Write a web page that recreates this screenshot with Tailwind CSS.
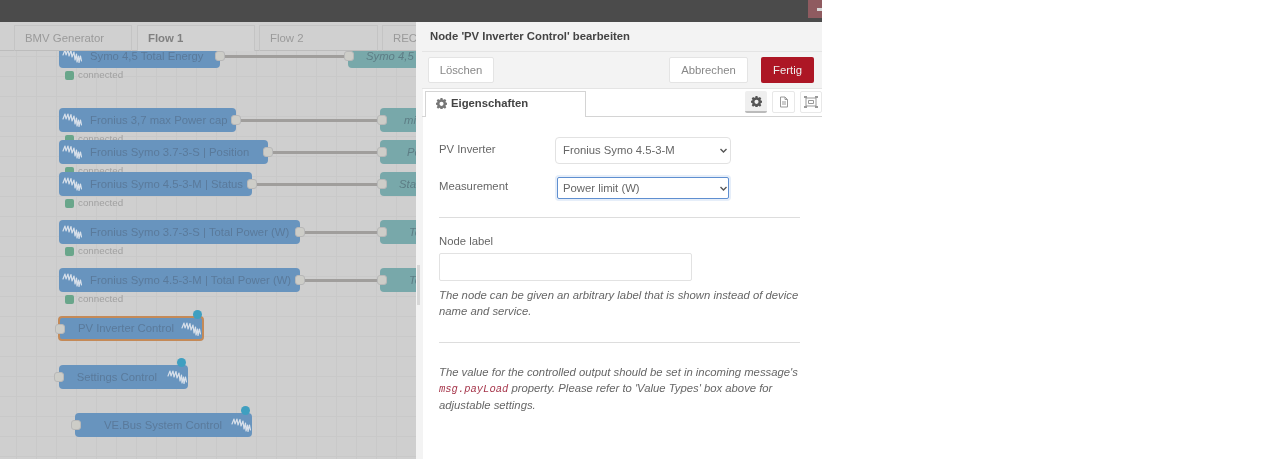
<!DOCTYPE html>
<html lang="en">
    <head>
        <meta charset="UTF-8" />
        <script src="https://cdn.jsdelivr.net/npm/@tailwindcss/browser@4"></script>
        <title>Node-RED</title>
    </head>
    <body class="bg-white h-[459px] overflow-hidden font-['Liberation_Sans',Arial,sans-serif]">
        <svg width="0" height="0" class="absolute">
            <defs>
                <path id="victron" fill="none" stroke="#d8e0ea" stroke-width="1.2" stroke-linejoin="round" stroke-linecap="round" d="M1 6 L3 1 L4 6 L6 1 L7 7 L9 1.5 L10 8 L12 3 L13 11 L14.5 5 L15 13 L16.5 7 L17 13.5 L18.5 7 L19.5 12" />
            </defs>
        </svg>

        <div class="flex flex-col w-[822px] h-[459px] blur-[0.3px]">
            <!-- Header -->
            <header class="flex justify-end h-[22px] shrink-0 bg-[#4b4b4b]">
                <div class="flex items-center justify-end w-[14px] h-[18px] bg-[#8f5b60]">
                    <div class="w-[5px] h-[3px] bg-[#d8d8d8]"></div>
                </div>
            </header>

            <div class="flex flex-1 min-h-0">
                <!-- Workspace -->
                <div class="relative w-[416px] shrink-0 overflow-hidden bg-[#cfcfcf] bg-[linear-gradient(#c9c9c9_1px,transparent_1px),linear-gradient(90deg,#c9c9c9_1px,transparent_1px)] bg-[size:20px_20px] bg-[position:-4px_-6px]">
                    <!-- Wires -->
                    <div class="absolute left-[220px] top-[33px] w-[130px] h-[3px] bg-[#a09e9c]"></div>
                    <div class="absolute left-[236px] top-[97px] w-[146px] h-[3px] bg-[#a09e9c]"></div>
                    <div class="absolute left-[268px] top-[129px] w-[114px] h-[3px] bg-[#a09e9c]"></div>
                    <div class="absolute left-[252px] top-[161px] w-[130px] h-[3px] bg-[#a09e9c]"></div>
                    <div class="absolute left-[300px] top-[209px] w-[82px] h-[3px] bg-[#a09e9c]"></div>
                    <div class="absolute left-[300px] top-[257px] w-[82px] h-[3px] bg-[#a09e9c]"></div>

                    <!-- Output nodes on the right -->
                    <div class="absolute left-[348px] top-[22px] w-[80px] h-[24px] rounded-[4px] bg-[#78a8aa] pl-[18px] text-[11.3px] leading-[24px] italic text-[#5d7d85] whitespace-nowrap">Symo 4,5</div>
                    <div class="absolute left-[380px] top-[86px] w-[50px] h-[24px] rounded-[4px] bg-[#78a8aa] pl-[24px] text-[11.3px] leading-[24px] italic text-[#5d7d85] whitespace-nowrap">mi</div>
                    <div class="absolute left-[380px] top-[118px] w-[50px] h-[24px] rounded-[4px] bg-[#78a8aa] pl-[27px] text-[11.3px] leading-[24px] italic text-[#5d7d85] whitespace-nowrap">Po</div>
                    <div class="absolute left-[380px] top-[150px] w-[50px] h-[24px] rounded-[4px] bg-[#78a8aa] pl-[19px] text-[11.3px] leading-[24px] italic text-[#5d7d85] whitespace-nowrap">Sta</div>
                    <div class="absolute left-[380px] top-[198px] w-[50px] h-[24px] rounded-[4px] bg-[#78a8aa] pl-[29px] text-[11.3px] leading-[24px] italic text-[#5d7d85] whitespace-nowrap">To</div>
                    <div class="absolute left-[380px] top-[246px] w-[50px] h-[24px] rounded-[4px] bg-[#78a8aa] pl-[29px] text-[11.3px] leading-[24px] italic text-[#5d7d85] whitespace-nowrap">To</div>
                    <div class="absolute left-[344px] top-[29px] w-[10px] h-[10px] rounded-[3px] border border-[#b8b8b8] bg-[#cdcdc8]"></div>
                    <div class="absolute left-[377px] top-[93px] w-[10px] h-[10px] rounded-[3px] border border-[#b8b8b8] bg-[#cdcdc8]"></div>
                    <div class="absolute left-[377px] top-[125px] w-[10px] h-[10px] rounded-[3px] border border-[#b8b8b8] bg-[#cdcdc8]"></div>
                    <div class="absolute left-[377px] top-[157px] w-[10px] h-[10px] rounded-[3px] border border-[#b8b8b8] bg-[#cdcdc8]"></div>
                    <div class="absolute left-[377px] top-[205px] w-[10px] h-[10px] rounded-[3px] border border-[#b8b8b8] bg-[#cdcdc8]"></div>
                    <div class="absolute left-[377px] top-[253px] w-[10px] h-[10px] rounded-[3px] border border-[#b8b8b8] bg-[#cdcdc8]"></div>

                    <!-- Input nodes: status text first so later nodes cover it -->
                    <div class="absolute left-[65px] top-[46px] flex items-center gap-[4px] text-[9.8px] text-[#a0a0a0]"><span class="w-[9px] h-[9px] rounded-[2px] bg-[#69a68b]"></span>connected</div>
                    <div class="absolute left-[59px] top-[22px] w-[161px] h-[24px] rounded-[4px] bg-[#6894be] flex items-center text-[11.3px] text-[#5a7a9b] whitespace-nowrap">
                        <svg class="ml-[3px] w-[20px] h-[14px]" viewBox="0 0 20 14"><use href="#victron" /></svg>
                        <span class="ml-[8px]">Symo 4,5 Total Energy</span>
                    </div>

                    <div class="absolute left-[65px] top-[110px] flex items-center gap-[4px] text-[9.8px] text-[#a0a0a0]"><span class="w-[9px] h-[9px] rounded-[2px] bg-[#69a68b]"></span>connected</div>
                    <div class="absolute left-[59px] top-[86px] w-[177px] h-[24px] rounded-[4px] bg-[#6894be] flex items-center text-[11.3px] text-[#5a7a9b] whitespace-nowrap">
                        <svg class="ml-[3px] w-[20px] h-[14px]" viewBox="0 0 20 14"><use href="#victron" /></svg>
                        <span class="ml-[8px]">Fronius 3,7 max Power cap</span>
                    </div>

                    <div class="absolute left-[65px] top-[142px] flex items-center gap-[4px] text-[9.8px] text-[#a0a0a0]"><span class="w-[9px] h-[9px] rounded-[2px] bg-[#69a68b]"></span>connected</div>
                    <div class="absolute left-[59px] top-[118px] w-[209px] h-[24px] rounded-[4px] bg-[#6894be] flex items-center text-[11.3px] text-[#5a7a9b] whitespace-nowrap">
                        <svg class="ml-[3px] w-[20px] h-[14px]" viewBox="0 0 20 14"><use href="#victron" /></svg>
                        <span class="ml-[8px]">Fronius Symo 3.7-3-S | Position</span>
                    </div>

                    <div class="absolute left-[59px] top-[150px] w-[193px] h-[24px] rounded-[4px] bg-[#6894be] flex items-center text-[11.3px] text-[#5a7a9b] whitespace-nowrap">
                        <svg class="ml-[3px] w-[20px] h-[14px]" viewBox="0 0 20 14"><use href="#victron" /></svg>
                        <span class="ml-[8px]">Fronius Symo 4.5-3-M | Status</span>
                    </div>
                    <div class="absolute left-[65px] top-[174px] flex items-center gap-[4px] text-[9.8px] text-[#a0a0a0]"><span class="w-[9px] h-[9px] rounded-[2px] bg-[#69a68b]"></span>connected</div>

                    <div class="absolute left-[59px] top-[198px] w-[241px] h-[24px] rounded-[4px] bg-[#6894be] flex items-center text-[11.3px] text-[#5a7a9b] whitespace-nowrap">
                        <svg class="ml-[3px] w-[20px] h-[14px]" viewBox="0 0 20 14"><use href="#victron" /></svg>
                        <span class="ml-[8px]">Fronius Symo 3.7-3-S | Total Power (W)</span>
                    </div>
                    <div class="absolute left-[65px] top-[222px] flex items-center gap-[4px] text-[9.8px] text-[#a0a0a0]"><span class="w-[9px] h-[9px] rounded-[2px] bg-[#69a68b]"></span>connected</div>

                    <div class="absolute left-[59px] top-[246px] w-[241px] h-[24px] rounded-[4px] bg-[#6894be] flex items-center text-[11.3px] text-[#5a7a9b] whitespace-nowrap">
                        <svg class="ml-[3px] w-[20px] h-[14px]" viewBox="0 0 20 14"><use href="#victron" /></svg>
                        <span class="ml-[8px]">Fronius Symo 4.5-3-M | Total Power (W)</span>
                    </div>
                    <div class="absolute left-[65px] top-[270px] flex items-center gap-[4px] text-[9.8px] text-[#a0a0a0]"><span class="w-[9px] h-[9px] rounded-[2px] bg-[#69a68b]"></span>connected</div>

                    <!-- Output ports of the input nodes -->
                    <div class="absolute left-[215px] top-[29px] w-[10px] h-[10px] rounded-[3px] border border-[#b8b8b8] bg-[#cdcdc8]"></div>
                    <div class="absolute left-[231px] top-[93px] w-[10px] h-[10px] rounded-[3px] border border-[#b8b8b8] bg-[#cdcdc8]"></div>
                    <div class="absolute left-[263px] top-[125px] w-[10px] h-[10px] rounded-[3px] border border-[#b8b8b8] bg-[#cdcdc8]"></div>
                    <div class="absolute left-[247px] top-[157px] w-[10px] h-[10px] rounded-[3px] border border-[#b8b8b8] bg-[#cdcdc8]"></div>
                    <div class="absolute left-[295px] top-[205px] w-[10px] h-[10px] rounded-[3px] border border-[#b8b8b8] bg-[#cdcdc8]"></div>
                    <div class="absolute left-[295px] top-[253px] w-[10px] h-[10px] rounded-[3px] border border-[#b8b8b8] bg-[#cdcdc8]"></div>

                    <!-- Control nodes -->
                    <div class="absolute left-[58px] top-[294px] w-[146px] h-[25px] rounded-[4px] border-2 border-[#c48a58] bg-[#6894be] flex items-center justify-end text-[11.3px] text-[#5a7a9b] whitespace-nowrap">
                        <span class="mr-[7px]">PV Inverter Control</span>
                        <svg class="mr-[1px] w-[20px] h-[14px]" viewBox="0 0 20 14"><use href="#victron" /></svg>
                    </div>
                    <div class="absolute left-[55px] top-[302px] w-[10px] h-[10px] rounded-[3px] border border-[#b8b8b8] bg-[#cdcdc8]"></div>
                    <div class="absolute left-[193px] top-[288px] w-[9px] h-[9px] rounded-full bg-[#3f9fc0]"></div>

                    <div class="absolute left-[59px] top-[343px] w-[129px] h-[24px] rounded-[4px] bg-[#6894be] flex items-center justify-end text-[11.3px] text-[#5a7a9b] whitespace-nowrap">
                        <span class="mr-[10px]">Settings Control</span>
                        <svg class="mr-[1px] w-[20px] h-[14px]" viewBox="0 0 20 14"><use href="#victron" /></svg>
                    </div>
                    <div class="absolute left-[54px] top-[350px] w-[10px] h-[10px] rounded-[3px] border border-[#b8b8b8] bg-[#cdcdc8]"></div>
                    <div class="absolute left-[177px] top-[336px] w-[9px] h-[9px] rounded-full bg-[#3f9fc0]"></div>

                    <div class="absolute left-[75px] top-[391px] w-[177px] h-[24px] rounded-[4px] bg-[#6894be] flex items-center justify-end text-[11.3px] text-[#5a7a9b] whitespace-nowrap">
                        <span class="mr-[9px]">VE.Bus System Control</span>
                        <svg class="mr-[1px] w-[20px] h-[14px]" viewBox="0 0 20 14"><use href="#victron" /></svg>
                    </div>
                    <div class="absolute left-[71px] top-[398px] w-[10px] h-[10px] rounded-[3px] border border-[#b8b8b8] bg-[#cdcdc8]"></div>
                    <div class="absolute left-[241px] top-[384px] w-[9px] h-[9px] rounded-full bg-[#3f9fc0]"></div>

                    <!-- Flow tabs -->
                    <div class="absolute inset-x-0 top-0 h-[29px] bg-[#d0d0d0] border-b border-[#bcbcbc] flex gap-[5px] pl-[14px] pt-[3px] text-[11.4px] text-[#9a9a9a]">
                        <div class="w-[118px] h-[26px] shrink-0 border border-b-0 border-[#c4c4c4] pl-[10px] leading-[24px]">BMV Generator</div>
                        <div class="w-[118px] h-[26px] shrink-0 border border-b-0 border-[#c4c4c4] bg-[#d2d2d2] pl-[10px] leading-[24px] font-bold text-[#808080]">Flow 1</div>
                        <div class="ml-[-1px] w-[119px] h-[26px] shrink-0 border border-b-0 border-[#c4c4c4] pl-[10px] leading-[24px]">Flow 2</div>
                        <div class="ml-[-1px] w-[60px] h-[26px] shrink-0 border border-b-0 border-[#c4c4c4] pl-[10px] leading-[24px]">REC</div>
                    </div>
                </div>

                <!-- Edit tray -->
                <div class="relative flex flex-col w-[406px] border-l-[7px] border-l-[#f3f3f3] bg-white text-[#555]">
                    <div class="absolute left-[-6px] top-[243px] w-[3px] h-[40px] bg-[#d8d8d8]"></div>
                    <div class="ml-[-1px] h-[30px] shrink-0 pl-[8px] bg-[#f3f3f3] border-b border-[#e4e4e4] text-[11.3px] leading-[28px] font-bold text-[#444]">Node 'PV Inverter Control' bearbeiten</div>
                    <div class="ml-[-1px] flex items-center justify-between h-[37px] shrink-0 pl-[6px] pr-[8px] bg-[#f3f3f3] border-b border-[#e4e4e4] text-[11.3px]">
                        <button class="w-[66px] h-[26px] bg-white border border-[#e4e4e4] rounded-[2px] text-[#888]">Löschen</button>
                        <div class="flex gap-[13px]">
                            <button class="w-[79px] h-[26px] bg-white border border-[#e4e4e4] rounded-[2px] text-[#888]">Abbrechen</button>
                            <button class="w-[53px] h-[26px] bg-[#ad1625] rounded-[2px] text-[#eeeeee]">Fertig</button>
                        </div>
                    </div>
                    <div class="ml-[-1px] flex items-end justify-between h-[28px] shrink-0 pl-[3px] border-b border-[#d4d4d4] pt-[2px]">
                        <div class="flex items-center gap-[4px] w-[161px] h-[26px] mb-[-1px] pl-[10px] pb-[2px] bg-white border border-b-0 border-[#d4d4d4] text-[11.3px] font-bold text-[#444]">
                            <svg class="w-[11px] h-[11px]" viewBox="0 0 16 16"><path fill="#777" fill-rule="evenodd" d="M6.6 0h2.8l.4 2.2 1.3.5L13 1.5l2 2-1.2 1.9.5 1.3 2.2.4v2.8l-2.2.4-.5 1.3 1.2 1.9-2 2-1.9-1.2-1.3.5-.4 2.2H6.6l-.4-2.2-1.3-.5L3 15.5l-2-2 1.2-1.9-.5-1.3L-.5 9.9V7.1l2.2-.4.5-1.3L1 3.5l2-2 1.9 1.2 1.3-.5zM8 5.5a3 3 0 1 0 0 6 3 3 0 0 0 0-6z" /></svg>
                            Eigenschaften
                        </div>
                        <div class="flex gap-[5px] self-start">
                            <div class="flex items-center justify-center w-[22px] h-[22px] rounded-[2px] bg-[#efefef] border-b-2 border-[#bbb]">
                                <svg class="w-[11px] h-[11px]" viewBox="0 0 16 16"><path fill="#555" fill-rule="evenodd" d="M6.6 0h2.8l.4 2.2 1.3.5L13 1.5l2 2-1.2 1.9.5 1.3 2.2.4v2.8l-2.2.4-.5 1.3 1.2 1.9-2 2-1.9-1.2-1.3.5-.4 2.2H6.6l-.4-2.2-1.3-.5L3 15.5l-2-2 1.2-1.9-.5-1.3L-.5 9.9V7.1l2.2-.4.5-1.3L1 3.5l2-2 1.9 1.2 1.3-.5zM8 5.5a3 3 0 1 0 0 6 3 3 0 0 0 0-6z" /></svg>
                            </div>
                            <div class="flex items-center justify-center w-[23px] h-[22px] rounded-[2px] border border-[#e8e8e8]">
                                <svg class="w-[12px] h-[12px]" viewBox="0 0 12 12" fill="none" stroke="#999"><path d="M2.5 1h4.5l2.5 2.5V11h-7zM7 1v2.5h2.5M4 6h4M4 8h4" /></svg>
                            </div>
                            <div class="flex items-center justify-center w-[22px] h-[22px] rounded-[2px] border border-[#e8e8e8]">
                                <svg class="w-[14px] h-[12px]" viewBox="0 0 14 12" fill="none" stroke="#999"><path d="M2 2h10v8H2z" /><path d="M4.5 4.5h5v3h-5z" /><path stroke-width="2" d="M0 1h3M11 1h3M0 11h3M11 11h3" /></svg>
                            </div>
                        </div>
                    </div>

                    <!-- Form -->
                    <div class="flex flex-col pl-[16px] w-[377px] text-[11.3px] text-[#666]">
                        <div class="flex items-center mt-[20px] h-[27px]">
                            <label class="w-[116px] mt-[-2px]">PV Inverter</label>
                            <div class="relative">
                                <select class="block appearance-none w-[176px] h-[27px] pl-[7px] bg-white border border-[#e2e2e2] rounded-[4px] text-[#666] text-[11.3px]"><option>Fronius Symo 4.5-3-M</option></select>
                                <svg class="absolute right-[4px] top-[11px] w-[7px] h-[5px]" viewBox="0 0 7 5" fill="none" stroke="#555" stroke-width="1.4"><path d="M.5 1 3.5 4 6.5 1" /></svg>
                            </div>
                        </div>
                        <div class="flex items-center mt-[13px] h-[22px]">
                            <label class="w-[118px] mt-[-3px]">Measurement</label>
                            <div class="relative">
                                <select class="block appearance-none w-[172px] h-[22px] pl-[5px] bg-white border border-[#5f8fd0] rounded-[2px] ring-2 ring-[#e6eef9] text-[#666] text-[11.3px]"><option>Power limit (W)</option></select>
                                <svg class="absolute right-[2px] top-[9px] w-[7px] h-[5px]" viewBox="0 0 7 5" fill="none" stroke="#555" stroke-width="1.4"><path d="M.5 1 3.5 4 6.5 1" /></svg>
                            </div>
                        </div>
                        <div class="mt-[18px] h-px w-[361px] bg-[#ddd]"></div>
                        <label class="mt-[16px] leading-[14px]">Node label</label>
                        <input class="mt-[5px] w-[253px] h-[28px] bg-white border border-[#e2e2e2] rounded-[2px]" />
                        <p class="mt-[6px] w-[361px] leading-[16px] italic text-[#666]">The node can be given an arbitrary label that is shown instead of device name and service.</p>
                        <div class="mt-[23px] h-px w-[361px] bg-[#ddd]"></div>
                        <p class="mt-[21px] w-[361px] leading-[16px] italic text-[#666]">The value for the controlled output should be set in incoming message's <code class="font-['Liberation_Mono',monospace] text-[10.5px] text-[#a6364b]">msg.payLoad</code> property. Please refer to 'Value Types' box above for adjustable settings.</p>
                    </div>
                </div>
            </div>
        </div>
    </body>
</html>
